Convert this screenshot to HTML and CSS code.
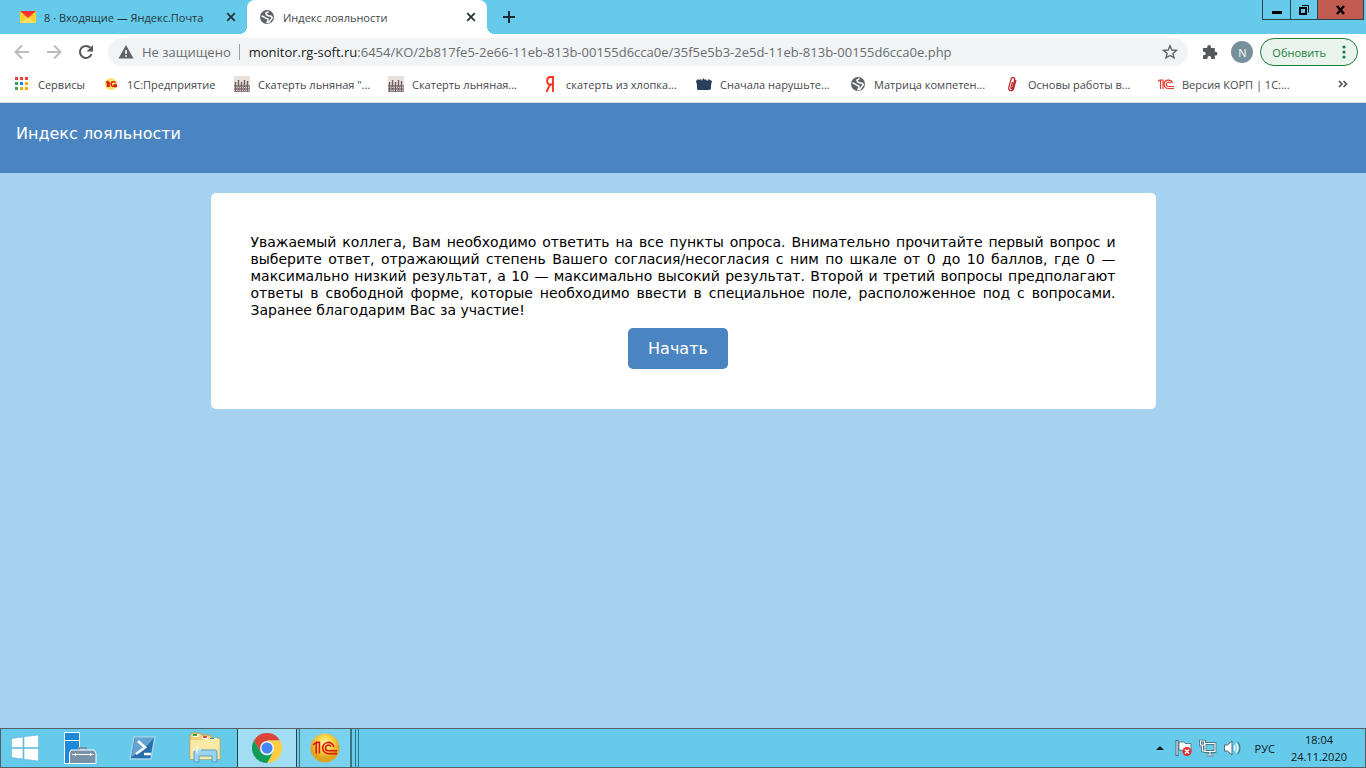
FILE: index.html
```html
<!DOCTYPE html>
<html lang="ru">
<head>
<meta charset="utf-8">
<meta name="viewport" content="width=device-width, initial-scale=1">
<title>Индекс лояльности</title>
<link rel="stylesheet" href="styles.css">
</head>
<body>
<svg class="defs" aria-hidden="true">
  <symbol id="globe" viewBox="0 0 16 16"><circle cx="8" cy="8" r="7" fill="#5f6368"/><path d="M9.500 2.600L7 4.200l.4 1.500 1.800 1.100 2.900.5 1.200 1.300-1.300 1.900-2.300 2.900-1.500.1.700-2-.1-1.700-2.200-.7-2.600-1.700-1.500-.3" fill="none" stroke="#fff" stroke-width="1.500"/></symbol>
  <symbol id="cross" viewBox="0 0 16 16"><path d="M4.200 4.200l7.600 7.600M11.800 4.200l-7.600 7.600" stroke="#25343b" stroke-width="1.800" fill="none"/></symbol>
  <symbol id="cloth" viewBox="0 0 16 16"><path fill="#e8e0da" d="M0 0h16v16H0z"/><path fill="#a39495" d="M0 9h16v7H0z"/><path d="M1.500 6v10M4.500 4v12M7.500 6v10M10.500 4v12M13.500 5v11" stroke="#6e5d60" stroke-width="1.400"/><path d="M0 11.500h16M0 14.500h16" stroke="#d5c9c6" stroke-width="1" stroke-dasharray="1 1"/></symbol>
  <symbol id="onec" viewBox="0 0 32 20"><path d="M1 6l4-3v14M9 17V3H5M31 17H20a7 7 0 1 1 7-8M31 13.500H20.500a3.600 3.600 0 1 1 3-5" fill="none" stroke="currentColor" stroke-width="2"/></symbol>
</svg>

<header class="browser">
  <div class="tabstrip">
    <div class="tab">
      <svg class="icon16" viewBox="0 0 16 16"><path fill="#ffcf2f" d="M0 2h16v12H0z"/><path fill="#ffdf60" d="M0 14l8-6 8 6z"/><path fill="#f33" d="M0 2h16L8 9z"/></svg>
      <span class="tab-title">8 · Входящие — Яндекс.Почта</span>
      <button class="tab-close" aria-label="Закрыть"><svg class="icon16"><use href="#cross"/></svg></button>
    </div>
    <div class="tab tab-active">
      <svg class="icon16"><use href="#globe"/></svg>
      <span class="tab-title">Индекс лояльности</span>
      <button class="tab-close" aria-label="Закрыть"><svg class="icon16"><use href="#cross"/></svg></button>
    </div>
    <button class="new-tab" aria-label="Новая вкладка"><svg class="icon16" viewBox="0 0 16 16"><path d="M8 2v12M2 8h12" stroke="#1b2a30" stroke-width="2"/></svg></button>
    <div class="window-buttons">
      <button class="win-min" aria-label="Свернуть"><svg width="12" height="12" viewBox="0 0 12 12"><path d="M1 7h10v3H1z"/></svg></button>
      <button class="win-max" aria-label="Восстановить"><svg width="12" height="12" viewBox="0 0 12 12" fill="none" stroke="#000"><path d="M4 1.500h6.500v7"/><path d="M2 4h6v6H2z" stroke-width="2"/></svg></button>
      <button class="win-close" aria-label="Закрыть окно"><svg width="12" height="12" viewBox="0 0 12 12"><path d="M2 2l7 8M9 2L2 10" stroke="#000" stroke-width="2.500"/></svg></button>
    </div>
  </div>

  <div class="toolbar">
    <button class="nav" aria-label="Назад"><svg class="icon16" viewBox="0 0 16 16"><path d="M15 8H2M8 1.500L1.500 8 8 14.500" fill="none" stroke="#babcbe" stroke-width="2"/></svg></button>
    <button class="nav" aria-label="Вперёд"><svg class="icon16" viewBox="0 0 16 16"><path d="M1 8h13M8 1.500L14.500 8 8 14.500" fill="none" stroke="#babcbe" stroke-width="2"/></svg></button>
    <button class="nav" aria-label="Обновить страницу"><svg class="icon16" viewBox="0 0 16 16"><path d="M13.500 10.200A6 6 0 1 1 12.300 3.800" fill="none" stroke="#54575b" stroke-width="2"/><path d="M15 1v6.500H8.500z" fill="#54575b"/></svg></button>
    <div class="omnibox">
      <svg class="icon16" viewBox="0 0 16 16"><path d="M8 1l7.500 13.500H.5z" fill="#5f6368"/><path d="M7.200 6h1.600v4H7.200zM7.200 11.200h1.600v1.600H7.200z" fill="#fff"/></svg>
      <span class="insecure">Не защищено</span>
      <span class="url"><b>monitor.rg-soft.ru</b>:6454/KO/2b817fe5-2e66-11eb-813b-00155d6cca0e/35f5e5b3-2e5d-11eb-813b-00155d6cca0e.php</span>
      <button class="star" aria-label="Добавить в закладки"><svg class="icon16" viewBox="0 0 16 16"><path d="M8 1.800l1.800 4.200 4.600.4-3.500 3 1.100 4.500-4-2.400-4 2.400 1.100-4.500-3.500-3 4.600-.4z" fill="none" stroke="#5f6368" stroke-width="1.400"/></svg></button>
    </div>
    <button class="ext" aria-label="Расширения"><svg class="icon16" viewBox="0 0 16 16"><path d="M1 4h4.200V3a1.900 1.900 0 0 1 3.800 0v1h3.800v3.800h.7a1.900 1.900 0 0 1 0 3.800h-.7V15H9.200v-1a1.900 1.900 0 0 0-3.800 0v1H1v-3.800h1a1.700 1.700 0 0 0 0-3.400H1z" fill="#54575b"/></svg></button>
    <button class="avatar">N</button>
    <button class="update">Обновить<svg width="4" height="14" viewBox="0 0 4 14" fill="#188038"><circle cx="2" cy="2" r="1.600"/><circle cx="2" cy="7" r="1.600"/><circle cx="2" cy="12" r="1.600"/></svg></button>
  </div>

  <nav class="bookmarks">
    <a class="bm bm-apps" href="#"><svg class="icon16" viewBox="0 0 16 16"><path fill="#ea4335" d="M1 1h3v3H1zM6 1h3v3H6zM11 1h3v3h-3z"/><path fill="#34a853" d="M1 6h3v3H1zM1 11h3v3H1z"/><path fill="#1a80e8" d="M6 6h3v3H6z"/><path fill="#f9ab00" d="M11 6h3v3h-3zM6 11h3v3H6zM11 11h3v3h-3z"/></svg>Сервисы</a>
    <a class="bm bm-1c" href="#"><svg class="icon16" viewBox="0 0 16 16"><circle cx="8" cy="8" r="6" fill="#ffe06a"/><path d="M3 6.500l1.500-1V11M6 11V5.500M14 10.500H10.500a2.400 2.400 0 1 1 2-3.600M14 9h-3.500" fill="none" stroke="#d8150b" stroke-width="1.400"/></svg>1С:Предприятие</a>
    <a class="bm" href="#"><svg class="icon16"><use href="#cloth"/></svg>Скатерть льняная "...</a>
    <a class="bm" href="#"><svg class="icon16"><use href="#cloth"/></svg>Скатерть льняная...</a>
    <a class="bm" href="#"><svg class="icon16" viewBox="0 0 16 16"><path d="M11 0v16M11 1H8.500C4 1 4 8.500 8.500 8.500H11M8 8.500L4.500 16" fill="none" stroke="#f52b12" stroke-width="1.800"/></svg>скатерть из хлопка...</a>
    <a class="bm" href="#"><svg class="icon16" viewBox="0 0 16 16"><path fill="#29405c" d="M0 5l2-2 1 1 2-1 1 2 1-3 2 2 1-1 1 2 2-2 1 1 2 1-1 4v4l-2 1H2l-1-1V9z"/></svg>Сначала нарушьте...</a>
    <a class="bm" href="#"><svg class="icon16"><use href="#globe"/></svg>Матрица компетен...</a>
    <a class="bm" href="#"><svg class="icon16" viewBox="0 0 16 16"><path d="M12 4l-2.200 8c-1 4-6 3.200-5-.6l2.200-8c.8-3 4.300-2 3.600.8L8.500 12c-.4 1.400-2 .9-1.600-.5L8.500 6" fill="none" stroke="#bd1f25" stroke-width="1.200"/></svg>Основы работы в...</a>
    <a class="bm" href="#"><svg class="icon16" viewBox="0 0 16 16"><path d="M0 5.500l1.500-1.500H5v9M2.500 4v9M16 12.500h-5.500a4.200 4.200 0 1 1 4-5.500M16 10.500h-5.500a2.200 2.200 0 1 1 2-3.200" fill="none" stroke="#e13a30" stroke-width="1.200"/></svg>Версия КОРП | 1С:...</a>
    <button class="more" aria-label="Другие закладки"><svg width="10" height="8" viewBox="0 0 10 8"><path d="M1 1l3 3-3 3M5.500 1l3 3-3 3" fill="none" stroke="#4b4e52" stroke-width="1.600"/></svg></button>
  </nav>
</header>

<main class="page">
  <div class="page-head"><h1>Индекс лояльности</h1></div>
  <section class="card">
    <p>Уважаемый коллега, Вам необходимо ответить на все пункты опроса. Внимательно прочитайте первый вопрос и выберите ответ, отражающий степень Вашего согласия/несогласия с ним по шкале от 0 до 10 баллов, где 0 — максимально низкий результат, а 10 — максимально высокий результат. Второй и третий вопросы предполагают ответы в свободной форме, которые необходимо ввести в специальное поле, расположенное под с вопросами. Заранее благодарим Вас за участие!</p>
    <div class="actions"><button class="start">Начать</button></div>
  </section>
</main>

<footer class="taskbar">
  <button class="task" aria-label="Пуск"><svg width="28" height="28" viewBox="0 0 28 28" fill="#fff" stroke="#4fa9c9" stroke-width=".5"><path d="M.5 4.500L12 3v10.500H.5zM13 2.800L27.500 1v12.500H13zM.5 14.500H12V25L.5 23.500zM13 14.500h14.500V27L13 25.200z"/></svg></button>
  <button class="task" aria-label="Диспетчер серверов"><svg width="34" height="34" viewBox="0 0 34 34" stroke="#fff"><path d="M1.500 1.500h15v31h-15z" fill="#1c8ad8"/><path d="M1.500 9.500h15" /><path d="M16 20v-3h7v3" fill="none" stroke="#7892a8" stroke-width="2"/><path d="M8 19h23l2 3v10.500H6.500V22z" fill="#7892a8"/><path d="M9 23.500h22M12.500 22v3M27.500 22v3" stroke-width="1.200"/></svg></button>
  <button class="task" aria-label="PowerShell"><svg width="30" height="26" viewBox="0 0 30 26"><path d="M7 2h21l-4 22H3z" fill="#2671ad" stroke="#a5d5ed" stroke-width="1.500"/><path d="M8 3h19L17 14 4.500 22z" fill="#64a4d0"/><path d="M11 6l7 6.500L9 19M17 19h7" fill="none" stroke="#fff" stroke-width="2.500"/></svg></button>
  <button class="task" aria-label="Проводник"><svg width="34" height="32" viewBox="0 0 34 32"><path d="M2 4l2-3h8l2 2h8l2 3h7l1 2v19H2z" fill="#efd179" stroke="#c4a34d"/><path d="M5 2h6v3H5zM14 4h6v3h-6zM22 6h7v3h-7z" fill="#fff"/><path d="M5 2h4v2H5z" fill="#28a745"/><path d="M15 4h4v2h-4z" fill="#e34a32"/><path d="M22 6h4v2h-4z" fill="#278bd5"/><path d="M2.500 8h12l2-1h15v20h-29z" fill="#fae9a4"/><path d="M6 30V20q0-2 2-2h19q2 0 2 2v10h-5v-6H11v6z" fill="#9ad3ef" stroke="#579dbe"/><path d="M9 14v8M5 18h8" stroke="#fff"/></svg></button>
  <button class="task task-active" aria-label="Chrome"><svg width="30" height="30" viewBox="0 0 30 30"><path d="M2 7.500A15 15 0 0 1 28 7.500H15L8.500 18.800z" fill="#db4437"/><path d="M28 7.500A15 15 0 0 1 15 30l6.500-11.200L15 7.500z" fill="#ffcd40"/><path d="M15 30A15 15 0 0 1 2 7.500l6.500 11.300a7.500 7.500 0 0 0 13 0z" fill="#0f9d58"/><circle cx="15" cy="15" r="7" fill="#f1f1f1"/><circle cx="15" cy="15" r="5.500" fill="#4285f4"/></svg></button>
  <button class="task task-open" aria-label="1С"><svg width="30" height="30" viewBox="0 0 30 30"><defs><radialGradient id="gold" cx="50%" cy="35%"><stop offset="0" stop-color="#fff6bd"/><stop offset=".5" stop-color="#fbd94c"/><stop offset="1" stop-color="#dfa41f"/></radialGradient></defs><circle cx="15" cy="15" r="14.500" fill="url(#gold)"/><svg x="2" y="7" width="26" height="16" color="#e0170e"><use href="#onec"/></svg></svg></button>
  <span class="stack"></span>
  <div class="tray">
    <svg class="caret" width="8" height="4" viewBox="0 0 8 4"><path d="M0 4l4-4 4 4z" fill="#10191d"/></svg>
    <svg width="18" height="18" viewBox="0 0 18 18"><path d="M2 1v16" stroke="#4d6a75" stroke-width="3"/><path d="M2 2v14" stroke="#fff"/><path d="M4 3h5l1 1.500h6v8H8L7 11H4z" fill="#fff" stroke="#4d6a75" stroke-width=".8"/><circle cx="12" cy="12.500" r="4.500" fill="#e02d2d"/><path d="M10 10.500l4 4M14 10.500l-4 4" stroke="#fff" stroke-width="1.400"/></svg>
    <svg width="18" height="18" viewBox="0 0 18 18" fill="none"><path d="M6 4.500h10v8H6zM11 13v3M7 16h8M1.500 2h4v4h-4zM3.500 6v6H6" stroke="#40616e" stroke-width="2.600"/><path d="M6 4.500h10v8H6zM11 13v3M7 16h8M1.500 2h4v4h-4zM3.500 6v6H6" stroke="#fff" stroke-width="1.200"/></svg>
    <svg width="18" height="18" viewBox="0 0 18 18" fill="none"><path d="M1.500 6h3L9 2v14l-4.500-4h-3z" fill="#fff" stroke="#4d6a75"/><path d="M11 6.500q2 2.500 0 5M13 4.500q3.500 4.500 0 9" stroke="#fff" stroke-width="1.500"/><path d="M15 3q4 6 0 12" stroke="#4d6a75"/></svg>
    <span class="lang">РУС</span>
    <div class="clock"><span>18:04</span><span>24.11.2020</span></div>
  </div>
</footer>
</body>
</html>
```
FILE: styles.css
```css
* { box-sizing: border-box; }

body {
  margin: 0;
  min-height: 100vh;
  display: flex;
  flex-direction: column;
  background: #a5d2ee;
  font-family: "Open Sans", "Noto Sans", sans-serif;
  font-size: 11px;
}

button {
  border: 0;
  padding: 0;
  background: none;
  font: inherit;
  display: flex;
  align-items: center;
  justify-content: center;
}

svg { flex: none; display: block; }
.defs { position: absolute; width: 0; height: 0; }
.icon16 { width: 16px; height: 16px; }

/* Browser window */
.browser { background: #fff; border-bottom: 1px solid #d9d9d9; }

.tabstrip {
  display: flex;
  height: 34px;
  padding-left: 8px;
  background: #66caea;
}

.tab {
  display: flex;
  align-items: center;
  gap: 8px;
  width: 239px;
  padding: 0 8px 0 12px;
  color: #25343b;
}

.tab-active {
  position: relative;
  width: 240px;
  background: #fff;
  border-radius: 8px 8px 0 0;
  color: #45484c;
}

.tab-active::before,
.tab-active::after {
  content: "";
  position: absolute;
  bottom: 0;
  width: 8px;
  height: 8px;
}

.tab-active::before { right: 100%; background: radial-gradient(circle at 0 0, #66caea 8px, #fff 8px); }
.tab-active::after { left: 100%; background: radial-gradient(circle at 100% 0, #66caea 8px, #fff 8px); }

.tab-title { flex: 1; white-space: nowrap; }
.new-tab { width: 44px; }

.window-buttons {
  display: flex;
  height: 20px;
  margin-left: auto;
  margin-right: 2px;
  border: 1px solid #28434e;
  border-top: 0;
}

.win-min { width: 27px; }
.win-max { width: 27px; border-left: 1px solid #28434e; }
.win-close { width: 46px; border-left: 1px solid #28434e; background: #c35c50; }

.toolbar {
  display: flex;
  align-items: center;
  height: 36px;
  padding: 0 8px 0 6px;
}

.nav { width: 32px; height: 28px; }

.omnibox {
  display: flex;
  align-items: center;
  flex: 1;
  min-width: 0;
  height: 28px;
  margin-left: 6px;
  padding: 0 10px;
  border-radius: 14px;
  background: #f1f3f4;
  color: #696d72;
  font-size: 13px;
  white-space: nowrap;
}

.insecure {
  margin-left: 8px;
  padding-right: 8px;
  border-right: 1px solid #9a9ea2;
  line-height: 16px;
}

.url { flex: 1; min-width: 0; overflow: hidden; margin-left: 9px; }
.url b { font-weight: 400; color: #202124; }

.ext { width: 20px; margin-left: 12px; }

.avatar {
  width: 22px;
  height: 22px;
  margin-left: 11px;
  border-radius: 11px;
  background: #78909c;
  color: #fff;
}

.update {
  height: 28px;
  margin-left: 7px;
  padding: 0 11px;
  gap: 16px;
  border: 1px solid #188038;
  border-radius: 14px;
  background: #ebf3ef;
  color: #188038;
}

.bookmarks {
  display: flex;
  align-items: center;
  height: 32px;
  padding-left: 6px;
  padding-bottom: 4px;
}

.bm {
  display: flex;
  align-items: center;
  gap: 8px;
  width: 154px;
  padding-left: 8px;
  color: #45484c;
  text-decoration: none;
  white-space: nowrap;
}

.bm-apps { width: 89px; }
.bm-1c { width: 131px; }
.more { margin-left: auto; margin-right: 18px; }

/* Survey page */
.page { flex: 1; font-family: Verdana, "DejaVu Sans", sans-serif; }

.page-head {
  height: 70px;
  padding: 21px 16px;
  background: #4b85c1;
  color: #fff;
}

.page-head h1 {
  margin: 0;
  font-size: 16px;
  font-weight: 400;
  line-height: 20px;
}

.card {
  max-width: 945px;
  margin: 20px auto;
  padding: 41px 40px 40px;
  border-radius: 5px;
  background: #fff;
}

.card p {
  margin: 0 0 9px;
  font-size: 14px;
  line-height: 17px;
  text-align: justify;
}

.actions {
  display: flex;
  justify-content: center;
  padding-right: 10px;
}

.start {
  width: 100px;
  height: 41px;
  border-radius: 5px;
  background: #4b85c1;
  color: #fff;
  font-size: 16px;
}

/* Taskbar */
.taskbar {
  display: flex;
  height: 40px;
  border: 1px solid #555e62;
  background: #66caea;
}

.task { width: 60px; }
.task:first-child { width: 48px; }
.task:nth-child(2) { width: 62px; }
.task:nth-child(3) { width: 62px; }
.task:nth-child(4) { width: 64px; }
.task-active { border: 1px solid #28434e; border-width: 0 1px; background: #a1ddf3; }
.task-open { width: 52px; margin-left: 2px; border: 1px solid #397487; border-width: 0 1px; background: #7bd2ee; }

.stack {
  width: 8px;
  border: 1px solid #397487;
  border-width: 0 1px;
  background: linear-gradient(90deg, #66caea 3px, #397487 3px, #397487 4px, #66caea 4px);
}

.tray {
  display: flex;
  align-items: center;
  gap: 6px;
  margin-left: auto;
  padding-right: 18px;
  color: #0e171b;
}

.caret { margin-right: 5px; }
.lang { margin-left: 8px; }

.clock {
  display: flex;
  flex-direction: column;
  align-items: center;
  margin-left: 10px;
  line-height: 17px;
}
```
